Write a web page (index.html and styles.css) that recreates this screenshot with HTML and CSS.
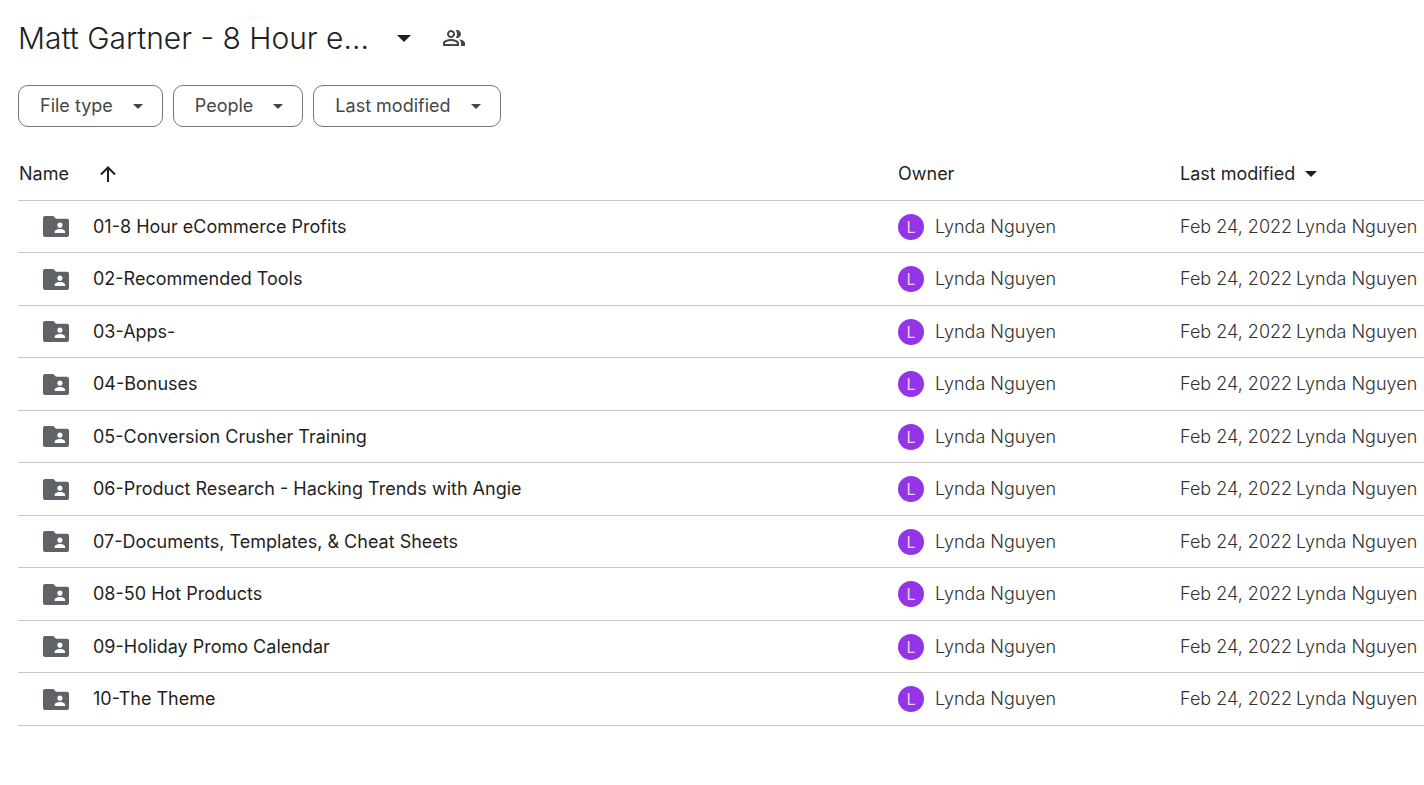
FILE: index.html
```
<!DOCTYPE html>
<html lang="en">
<head>
  <meta charset="utf-8">
  <title>Matt Gartner - 8 Hour e...</title>
  <link rel="stylesheet" href="styles.css">
</head>
<body>
  <svg class="sprite" aria-hidden="true">
    <symbol id="caret" viewBox="0 0 10 5"><path d="M0 0h10L5 5z"/></symbol>
    <symbol id="folder" viewBox="2 4 20 16">
      <path d="M20.5 6H12l-2-2H3.500Q2 4 2 5.500v13Q2 20 3.500 20h17q1.500 0 1.500-1.500v-11Q22 6 20.500 6zM15 9c1.100 0 2 .9 2 2s-.9 2-2 2-2-.9-2-2 .9-2 2-2zm4 8h-8v-1c0-1.330 2.670-2 4-2s4 .67 4 2v1z"/>
    </symbol>
  </svg>

  <header class="header">
    <h1 class="title">
      <button class="title-button">Matt Gartner - 8 Hour e...<svg class="title-caret"><use href="#caret"/></svg></button>
    </h1>
    <button class="share-button" aria-label="Shared">
      <svg class="people-icon" viewBox="1 4 22 16">
        <path d="M16.670 13.130C18.040 14.060 19 15.320 19 17v3h4v-3c0-2.180-3.570-3.470-6.330-3.870zM15 12c2.210 0 4-1.790 4-4s-1.790-4-4-4c-.47 0-.91.1-1.330.24C14.500 5.270 15 6.580 15 8s-.5 2.730-1.330 3.760c.42.14.86.24 1.330.24zM9 12c2.210 0 4-1.790 4-4s-1.790-4-4-4-4 1.790-4 4 1.790 4 4 4zm0-6c1.100 0 2 .9 2 2s-.9 2-2 2-2-.9-2-2 .9-2 2-2zM9 13c-2.670 0-8 1.340-8 4v3h16v-3c0-2.660-5.330-4-8-4zm6 5H3v-.99C3.200 16.290 6.300 15 9 15s5.800 1.290 6 2v1z"/>
      </svg>
    </button>
  </header>

  <div class="filters">
    <button class="filter">File type<svg class="caret"><use href="#caret"/></svg></button>
    <button class="filter">People<svg class="caret"><use href="#caret"/></svg></button>
    <button class="filter">Last modified<svg class="caret"><use href="#caret"/></svg></button>
  </div>

  <table class="files">
    <thead>
      <tr>
        <th class="col-name">
          <button class="sort">Name<svg class="arrow" viewBox="0 0 16 16"><path d="M8 16V1.500M1 8.500l7-7 7 7"/></svg></button>
        </th>
        <th class="col-owner">Owner</th>
        <th class="col-modified">
          <button class="sort sort-modified">Last modified<svg class="sort-caret"><use href="#caret"/></svg></button>
        </th>
      </tr>
    </thead>
    <tbody id="rows"></tbody>
  </table>

  <script>
    const folders = [
      '01-8 Hour eCommerce Profits',
      '02-Recommended Tools',
      '03-Apps-',
      '04-Bonuses',
      '05-Conversion Crusher Training',
      '06-Product Research - Hacking Trends with Angie',
      '07-Documents, Templates, &amp; Cheat Sheets',
      '08-50 Hot Products',
      '09-Holiday Promo Calendar',
      '10-The Theme'
    ];

    document.getElementById('rows').innerHTML = folders.map(name => `
      <tr>
        <td><div class="name"><svg class="folder"><use href="#folder"/></svg>${name}</div></td>
        <td><div class="owner"><span class="avatar">L</span>Lynda Nguyen</div></td>
        <td><div class="modified"><span>Feb 24, 2022</span><span>Lynda Nguyen</span></div></td>
      </tr>`).join('');
  </script>
</body>
</html>
```
FILE: styles.css
```
body {
  margin: 0;
  padding: 16px 0 0 18px;
  font-family: "Google Sans", Inter, sans-serif;
  font-size: 18px;
  line-height: 24px;
  color: #1f1f1f;
  background: #fff;
}

button {
  padding: 0;
  border: none;
  background: none;
  font: inherit;
  color: inherit;
  cursor: pointer;
}

svg {
  flex: none;
  fill: currentColor;
}

.sprite {
  display: none;
}

.header {
  display: flex;
  align-items: center;
  gap: 32px;
  height: 44px;
}

.title {
  margin: 0;
  font-size: 30px;
  font-weight: 300;
  line-height: 40px;
}

.title-button {
  display: flex;
  align-items: center;
  gap: 28px;
}

.title-caret {
  width: 14px;
  height: 7px;
}

.share-button {
  display: flex;
  color: #444746;
}

.people-icon {
  width: 22px;
  height: 16px;
}

.filters {
  display: flex;
  gap: 10px;
  margin-top: 25px;
}

.filter {
  display: flex;
  align-items: center;
  gap: 20px;
  height: 42px;
  padding: 0 19px 0 21px;
  border: 1px solid #747775;
  border-radius: 10px;
  color: #444746;
}

.caret {
  width: 10px;
  height: 5px;
}

.files {
  width: 100%;
  margin-top: 20px;
  border-collapse: separate;
  border-spacing: 0;
  table-layout: fixed;
}

.files th,
.files td {
  height: 51px;
  padding: 0;
  border-bottom: 1px solid #c7c7c7;
  text-align: left;
  white-space: nowrap;
}

.files th {
  height: 53px;
  font-weight: 400;
}

.files tbody tr:nth-child(even) td {
  height: 52px;
}

.col-owner {
  width: 282px;
}

.col-modified {
  width: 244px;
}

.sort {
  display: flex;
  align-items: center;
  gap: 31px;
  padding-left: 1px;
}

.sort-modified {
  gap: 10px;
  padding-left: 0;
}

.arrow {
  width: 16px;
  height: 16px;
  fill: none;
  stroke: currentColor;
  stroke-width: 2;
}

.sort-caret {
  width: 12px;
  height: 6px;
}

.name {
  display: flex;
  align-items: center;
  gap: 24px;
  padding-left: 25px;
}

.folder {
  width: 26px;
  height: 21px;
  color: #5f6368;
}

.owner {
  display: flex;
  align-items: center;
  gap: 11px;
  color: #303231;
  font-weight: 300;
}

.avatar {
  width: 26px;
  height: 26px;
  border-radius: 50%;
  background: #9334e6;
  color: #e9d2fd;
  font-size: 16px;
  font-weight: 400;
  line-height: 26px;
  text-align: center;
}

.modified {
  display: flex;
  gap: 4px;
  color: #303231;
  font-weight: 300;
}
```
